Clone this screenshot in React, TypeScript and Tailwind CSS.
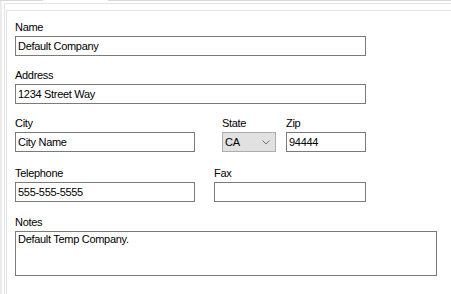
import type { ReactNode } from 'react';

const inputCls =
  'block h-[20px] border border-[#7a7a7a] bg-white px-[2px] text-[11px] leading-[13px] tracking-[-0.3px] text-black outline-none';

function Field({ label, width, children }: { label: string; width: string; children: ReactNode }) {
  return (
    <div className={`flex flex-col ${width}`}>
      <label className="mb-[2px] h-[13px] text-[11px] leading-[13px] tracking-[-0.3px] text-black">{label}</label>
      {children}
    </div>
  );
}

function TextBox({ value, width }: { value: string; width: string }) {
  return <input readOnly value={value} className={`${inputCls} ${width}`} />;
}

export default function App() {
  return (
    <div className="flex h-[294px] w-[451px] flex-col overflow-hidden bg-white font-['Liberation_Sans',Arial,sans-serif]">
      {/* tab strip edge */}
      <div className="flex h-px shrink-0">
        <div className="w-[43px] bg-[#d9d9d9]" />
        <div className="w-[65px]" />
        <div className="flex-1 bg-[#d9d9d9]" />
      </div>

      <div className="flex flex-1 flex-col border-l-2 border-[#ececec] pl-[2px] pt-[2px]">
        <div className="flex flex-1 flex-col border-l border-t border-[#e3e3e3] pl-px pt-[6px]">
          <div className="flex-1 border-l border-t border-[#e3e3e3] pl-[8px] pt-[10px]">
            {/* Name */}
            <Field label="Name" width="w-[351px]">
              <TextBox value="Default Company" width="w-[351px]" />
            </Field>

            {/* Address */}
            <div className="mt-[13px]">
              <Field label="Address" width="w-[351px]">
                <TextBox value="1234 Street Way" width="w-[351px]" />
              </Field>
            </div>

            {/* City / State / Zip */}
            <div className="mt-[13px] flex">
              <Field label="City" width="w-[180px]">
                <TextBox value="City Name" width="w-[180px]" />
              </Field>
              <div className="ml-[27px]">
                <Field label="State" width="w-[54px]">
                  <div className="flex h-[20px] w-[54px] items-center justify-between border border-[#adadad] bg-[#e1e1e1] pl-[2px] pr-[5px] text-[11px] leading-[13px] tracking-[-0.3px] text-black">
                    <span>CA</span>
                    <svg width="8" height="5" viewBox="0 0 8 5" fill="none">
                      <path d="M0.5 0.5 L4 4 L7.5 0.5" stroke="#707070" strokeWidth="1" />
                    </svg>
                  </div>
                </Field>
              </div>
              <div className="ml-[10px]">
                <Field label="Zip" width="w-[80px]">
                  <TextBox value="94444" width="w-[80px]" />
                </Field>
              </div>
            </div>

            {/* Telephone / Fax */}
            <div className="mt-[15px] flex">
              <Field label="Telephone" width="w-[180px]">
                <TextBox value="555-555-5555" width="w-[180px]" />
              </Field>
              <div className="ml-[19px]">
                <Field label="Fax" width="w-[152px]">
                  <TextBox value="" width="w-[152px]" />
                </Field>
              </div>
            </div>

            {/* Notes */}
            <div className="mt-[14px]">
              <Field label="Notes" width="w-[422px]">
                <textarea
                  readOnly
                  value="Default Temp Company."
                  className="block h-[45px] w-[422px] resize-none border border-[#7a7a7a] bg-white px-[2px] py-px text-[11px] leading-[13px] tracking-[-0.3px] text-black outline-none"
                />
              </Field>
            </div>
          </div>
        </div>
      </div>
    </div>
  );
}
